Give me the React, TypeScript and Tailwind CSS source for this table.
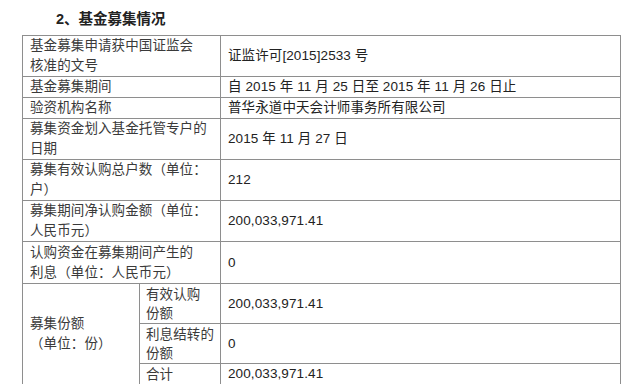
const rows: { label: string[]; value: string; h: string }[] = [
  { label: ["基金募集申请获中国证监会", "核准的文号"], value: "证监许可[2015]2533 号", h: "h-[41px]" },
  { label: ["基金募集期间"], value: "自 2015 年 11 月 25 日至 2015 年 11 月 26 日止", h: "h-[21px]" },
  { label: ["验资机构名称"], value: "普华永道中天会计师事务所有限公司", h: "h-[20px]" },
  { label: ["募集资金划入基金托管专户的", "日期"], value: "2015 年 11 月 27 日", h: "h-[41px]" },
  { label: ["募集有效认购总户数（单位：", "户）"], value: "212", h: "h-[41px]" },
  { label: ["募集期间净认购金额（单位：", "人民币元）"], value: "200,033,971.41", h: "h-[40px]" },
  { label: ["认购资金在募集期间产生的", "利息（单位：人民币元）"], value: "0", h: "h-[42px]" },
];

const cell = "border border-[#8e8e8e] px-[7px] py-0 align-middle leading-[20px] whitespace-nowrap";
const sub = "border border-[#8e8e8e] pl-[6px] pr-0 py-0 align-middle leading-[19px] whitespace-nowrap";

export default function App() {
  return (
    <div
      className="w-[640px] h-[384px] overflow-hidden bg-white text-[#3a3a3a]"
      style={{ fontFamily: '"Liberation Sans", "Noto Sans CJK SC", sans-serif' }}
    >
      <div className="h-[35px] pl-[56px] pt-[9px] text-[14.5px] font-bold leading-[20px] text-[#222]">
        2、基金募集情况
      </div>
      <table className="ml-[22px] w-[599px] table-fixed border-collapse text-[13.5px] tracking-[0.1px]">
        <colgroup>
          <col className="w-[117px]" />
          <col className="w-[81px]" />
          <col />
        </colgroup>
        <tbody>
          {rows.map((r, i) => (
            <tr key={i} className={r.h}>
              <td colSpan={2} className={cell}>
                {r.label.map((l, j) => (
                  <div key={j}>{l}</div>
                ))}
              </td>
              <td className={cell + " text-[#222]"}>{r.value}</td>
            </tr>
          ))}
          <tr className="h-[40px]">
            <td rowSpan={3} className={cell}>
              <div>募集份额</div>
              <div>（单位：份）</div>
            </td>
            <td className={sub}>
              <div>有效认购</div>
              <div>份额</div>
            </td>
            <td className={cell + " text-[#222]"}>200,033,971.41</td>
          </tr>
          <tr className="h-[40px]">
            <td className={sub}>
              <div>利息结转的</div>
              <div>份额</div>
            </td>
            <td className={cell + " text-[#222]"}>0</td>
          </tr>
          <tr className="h-[20px]">
            <td className={sub}>合计</td>
            <td className={cell + " text-[#222] leading-[19px]"}>200,033,971.41</td>
          </tr>
          <tr className="h-[21px]">
            <td colSpan={2} className={cell}></td>
            <td className={cell}></td>
          </tr>
        </tbody>
      </table>
    </div>
  );
}
